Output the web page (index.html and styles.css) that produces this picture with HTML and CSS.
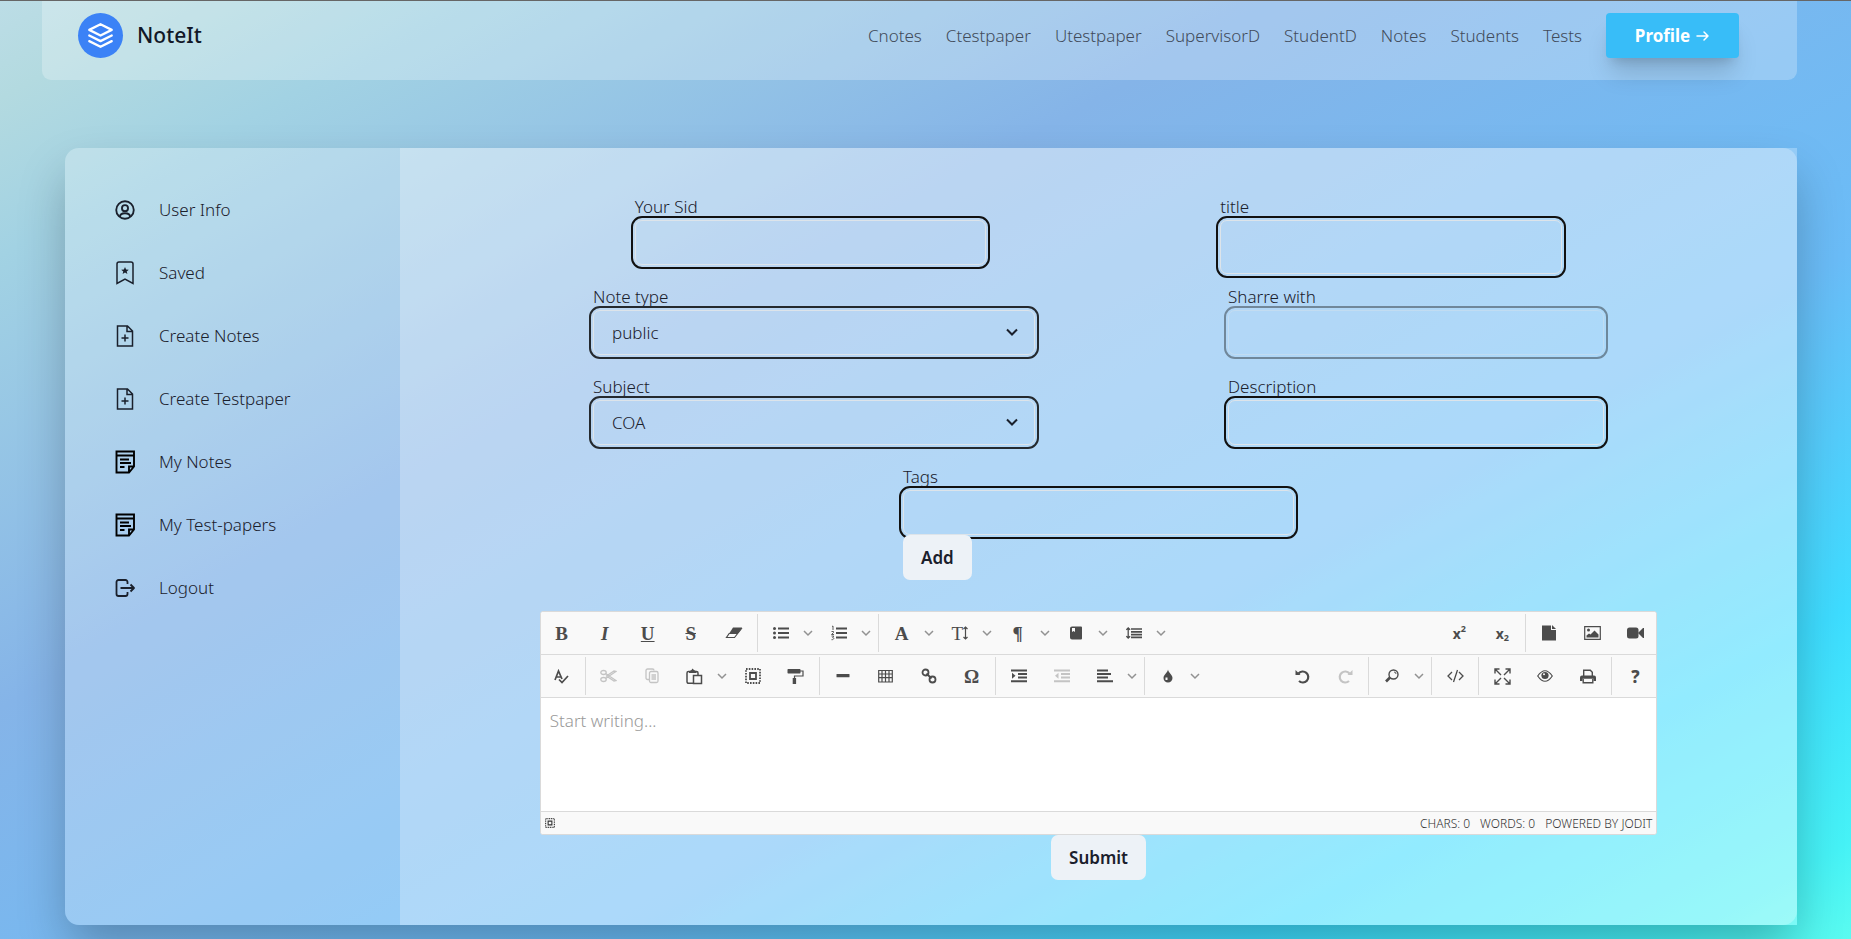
FILE: index.html
```
<!DOCTYPE html>
<html lang="en">
<head>
  <meta charset="UTF-8">
  <meta name="viewport" content="width=device-width, initial-scale=1.0">
  <title>NoteIt</title>
  <link rel="stylesheet" href="styles.css">
</head>
<body>

  <!-- shared icons -->
  <svg class="sprite" aria-hidden="true">
    <symbol id="chev" viewBox="0 0 10 10"><path d="M1 3l4 4 4-4" fill="none" stroke="#929292" stroke-width="1.500"/></symbol>
    <symbol id="file-plus" viewBox="0 0 24 24"><path d="M4.500 2h10l5 5v15h-15zM14 2v5.500h5.500M12 10.500v7M8.500 14h7" fill="none" stroke="currentColor" stroke-width="1.500"/></symbol>
    <symbol id="note" viewBox="0 0 24 24"><path d="M3.500 1.500h17.500v15l-5 6H3.500zM3.500 5.500H21M7 9.500h9M7 13h11M7 17h4.500M21 16.500h-5V22" fill="none" stroke="#000" stroke-width="1.900"/></symbol>
    <symbol id="select-all" viewBox="0 0 16 16"><path d="M1 1h14v14H1z" fill="none" stroke="currentColor" stroke-width="1.800" stroke-dasharray="1.600 1.200"/><path d="M5 5h6v6H5z" fill="none" stroke="currentColor" stroke-width="1.800"/></symbol>
  </svg>

  <header class="navbar">
    <a href="#" class="brand">
      <span class="brand-logo">
        <svg width="27" height="27" viewBox="0 0 24 24" fill="none" stroke="#fff" stroke-width="2" stroke-linecap="round" stroke-linejoin="round"><path d="M12 2L2 7l10 5 10-5-10-5zM2 17l10 5 10-5M2 12l10 5 10-5"/></svg>
      </span>
      <span>NoteIt</span>
    </a>
    <nav class="nav-links">
      <a href="#">Cnotes</a>
      <a href="#">Ctestpaper</a>
      <a href="#">Utestpaper</a>
      <a href="#">SupervisorD</a>
      <a href="#">StudentD</a>
      <a href="#">Notes</a>
      <a href="#">Students</a>
      <a href="#">Tests</a>
      <button type="button" class="profile-btn">Profile
        <svg width="14" height="14" viewBox="0 0 14 14" fill="none" stroke="#fff" stroke-width="1.500" stroke-linecap="round" stroke-linejoin="round"><path d="M1 7h11M8 3l4 4-4 4"/></svg>
      </button>
    </nav>
  </header>

  <main class="panel">
    <aside class="sidebar">
      <a href="#">
        <svg width="24" height="24" viewBox="0 0 26 26" fill="none" stroke="currentColor" stroke-width="2"><circle cx="13" cy="13" r="9.500"/><circle cx="13" cy="11" r="3.300"/><path d="M7.500 20.500c0-3 2-4 5.500-4s5.500 1 5.500 4"/></svg>
        User Info
      </a>
      <a href="#">
        <svg width="24" height="24" viewBox="0 0 24 24" fill="none" stroke="currentColor" stroke-width="1.500"><path d="M4 22.500V3a2 2 0 0 1 2-2h12a2 2 0 0 1 2 2v19.500l-8-4.500z"/><path d="M12 6l1.100 2.500 2.700.200-2.100 1.700.7 2.600-2.400-1.400L9.600 13l.7-2.600-2.100-1.700 2.700-.2z" fill="currentColor" stroke="none"/></svg>
        Saved
      </a>
      <a href="#"><svg width="24" height="24"><use href="#file-plus"/></svg>Create Notes</a>
      <a href="#"><svg width="24" height="24"><use href="#file-plus"/></svg>Create Testpaper</a>
      <a href="#"><svg width="24" height="24"><use href="#note"/></svg>My Notes</a>
      <a href="#"><svg width="24" height="24"><use href="#note"/></svg>My Test-papers</a>
      <a href="#">
        <svg width="24" height="24" viewBox="0 0 24 24" fill="none" stroke="currentColor" stroke-width="1.800" stroke-linejoin="round"><path d="M14.500 8V6a2 2 0 0 0-2-2H5.500a2 2 0 0 0-2 2v12a2 2 0 0 0 2 2h7a2 2 0 0 0 2-2v-2M7.500 12h13.500M17.500 8.500L21 12l-3.500 3.500"/></svg>
        Logout
      </a>
    </aside>

    <form class="note-form">
      <div class="form-row">
        <div class="field w-sm">
          <label for="sid">Your Sid</label>
          <input type="text" id="sid">
        </div>
        <div class="field w-xs">
          <label for="title">title</label>
          <input type="text" id="title" class="tall">
        </div>
      </div>

      <div class="form-row">
        <div class="field w-lg">
          <label for="type">Note type</label>
          <div class="select-wrap">
            <select id="type"><option>public</option><option>private</option></select>
            <svg width="12" height="12" viewBox="0 0 12 12"><path d="M1 3.500l5 5 5-5" fill="none" stroke="#1a202c" stroke-width="2"/></svg>
          </div>
        </div>
        <div class="field w-md">
          <label for="share">Sharre with</label>
          <input type="text" id="share" disabled>
        </div>
      </div>

      <div class="form-row">
        <div class="field w-lg">
          <label for="subject">Subject</label>
          <div class="select-wrap">
            <select id="subject"><option>COA</option></select>
            <svg width="12" height="12" viewBox="0 0 12 12"><path d="M1 3.500l5 5 5-5" fill="none" stroke="#1a202c" stroke-width="2"/></svg>
          </div>
        </div>
        <div class="field w-md">
          <label for="desc">Description</label>
          <input type="text" id="desc">
        </div>
      </div>

      <div class="form-row">
        <div class="tags w-tags">
          <label for="tags">Tags</label>
          <input type="text" id="tags">
          <button type="button" class="btn">Add</button>
        </div>
      </div>

      <div class="editor">
        <div class="toolbar">
          <div class="group">
            <button type="button" class="serif"><b>B</b></button>
            <button type="button" class="serif"><b><i>I</i></b></button>
            <button type="button" class="serif"><b><u>U</u></b></button>
            <button type="button" class="serif strike"><b>S</b></button>
            <button type="button" aria-label="Clear"><svg width="18" height="14" viewBox="0 0 18 14"><path d="M8 1.500h9L13.500 7h-9z" fill="currentColor"/><path d="M4.500 7L1.500 11.500h8L17 2M13 7.500H4.500" fill="none" stroke="currentColor" stroke-width="1.200"/></svg></button>
          </div>
          <div class="group">
            <button type="button" class="drop" aria-label="Bullet list"><svg width="16" height="16" viewBox="0 0 16 16"><path d="M5 3.500h11M5 8h11M5 12.500h11" stroke="currentColor" stroke-width="2"/><circle cx="1.500" cy="3.500" r="1.500"/><circle cx="1.500" cy="8" r="1.500"/><circle cx="1.500" cy="12.500" r="1.500"/></svg><svg class="chev"><use href="#chev"/></svg></button>
            <button type="button" class="drop" aria-label="Numbered list"><svg width="16" height="16" viewBox="0 0 16 16"><path d="M5 3.500h11M5 8h11M5 12.500h11" stroke="currentColor" stroke-width="2"/><path d="M1 1.500l1-.5v4M.5 6.500h2v1l-2 2h2.500M.5 11h2.200l-1 1.700c2 0 1 2.300-1.200 2" fill="none" stroke="currentColor" stroke-width=".9"/></svg><svg class="chev"><use href="#chev"/></svg></button>
          </div>
          <div class="group">
            <button type="button" class="drop serif"><span><b>A</b></span><svg class="chev"><use href="#chev"/></svg></button>
            <button type="button" class="drop serif"><span>T<svg width="5" height="14" viewBox="0 0 5 14"><path d="M2.500 1v12M.5 3l2-2 2 2M.5 11l2 2 2-2" fill="none" stroke="currentColor" stroke-width="1.200"/></svg></span><svg class="chev"><use href="#chev"/></svg></button>
            <button type="button" class="drop serif"><span><b>¶</b></span><svg class="chev"><use href="#chev"/></svg></button>
            <button type="button" class="drop" aria-label="Class"><svg width="12" height="14" viewBox="0 0 12 14"><path d="M2 .5h9a1 1 0 0 1 1 1v11a1 1 0 0 1-1 1H2a2 2 0 0 1-2-2v-9a2 2 0 0 1 2-2z"/><path d="M2 2h3v4L3.500 5 2 6z" fill="#f9f9f9"/></svg><svg class="chev"><use href="#chev"/></svg></button>
            <button type="button" class="drop" aria-label="Line height"><svg width="16" height="14" viewBox="0 0 16 14"><path d="M5 3h11M5 5.800h11M5 8.600h11M5 11.400h11" stroke="currentColor" stroke-width="1.700"/><path d="M2.200 2v10M.3 3.800L2.200 2l1.900 1.800M.3 10.200L2.200 12l1.900-1.800" fill="none" stroke="currentColor" stroke-width="1.300"/></svg><svg class="chev"><use href="#chev"/></svg></button>
          </div>
          <div class="spacer"></div>
          <div class="group">
            <button type="button" class="script">x<sup>2</sup></button>
            <button type="button" class="script">x<sub>2</sub></button>
          </div>
          <div class="group">
            <button type="button" aria-label="File"><svg width="14" height="16" viewBox="0 0 14 16"><path d="M0 .5h9v4.500h5v10.500H0z"/><path d="M10 0l4 4h-4z"/></svg></button>
            <button type="button" aria-label="Image"><svg width="17" height="14" viewBox="0 0 17 14"><path d="M.7.7h15.600v12.600H.7z" fill="none" stroke="currentColor" stroke-width="1.200"/><circle cx="4.500" cy="4" r="1.500"/><path d="M2.500 11.500V9.500L5 7.500l1.500 1 4-4 4 4v3z"/></svg></button>
            <button type="button" aria-label="Video"><svg width="17" height="12" viewBox="0 0 17 12"><rect y=".5" width="11.500" height="11" rx="2.500"/><path d="M11 6l5-5h1v10h-1z"/></svg></button>
          </div>
        </div>

        <div class="toolbar">
          <div class="group">
            <button type="button" aria-label="Spellcheck"><svg width="15" height="15" viewBox="0 0 15 15"><path d="M1 11L4.500 2 8 10M2 8h5M5 10.500l3 3L14 7" fill="none" stroke="currentColor" stroke-width="1.700"/></svg></button>
          </div>
          <div class="group">
            <button type="button" disabled aria-label="Cut"><svg width="17" height="14" viewBox="0 0 17 14" fill="none" stroke="currentColor" stroke-width="1.300"><ellipse cx="3.500" cy="3.500" rx="2.700" ry="2"/><ellipse cx="3.500" cy="10.500" rx="2.700" ry="2"/><path d="M5.500 4.500L16 11.500l-2 .5-8-5.200M5.500 9.500L16 2.500 14 2 6 7.200"/></svg></button>
            <button type="button" disabled aria-label="Copy"><svg width="14" height="16" viewBox="0 0 14 16" fill="none" stroke="currentColor" stroke-width="1.300"><path d="M4 11.500H2.500A1.500 1.500 0 0 1 1 10V2.500A1.500 1.500 0 0 1 2.500 1h5A1.500 1.500 0 0 1 9 2.500"/><rect x="4.500" y="3.500" width="8.500" height="11" rx="1.500"/><path d="M6.500 7h4.500M6.500 9h4.500M6.500 11h4.500"/></svg></button>
            <button type="button" class="drop" aria-label="Paste"><svg width="17" height="17" viewBox="0 0 17 17"><path d="M7 15.300H2.500a1.500 1.500 0 0 1-1.500-1.500V5a1.500 1.500 0 0 1 1.500-1.500h8A1.500 1.500 0 0 1 12 5v2M7.500 7.500h8v8h-8z" fill="none" stroke="currentColor" stroke-width="1.500"/><path d="M3 5V3.500L5.500 2 6.500.5 8 2l2.500 1.500V5z"/></svg><svg class="chev"><use href="#chev"/></svg></button>
            <button type="button" aria-label="Select all"><svg width="16" height="16"><use href="#select-all"/></svg></button>
            <button type="button" aria-label="Copy format"><svg width="17" height="16" viewBox="0 0 17 16"><rect x=".5" y="1" width="13" height="4.500" rx=".7"/><path d="M13 3h3v5H7.500v3" fill="none" stroke="currentColor" stroke-width="1.200"/><path d="M5.700 10h3.400v6H5.700z"/></svg></button>
          </div>
          <div class="group">
            <button type="button" aria-label="Line"><svg width="14" height="14" viewBox="0 0 14 14"><rect x=".5" y="5" width="13" height="3.300" rx=".6"/></svg></button>
            <button type="button" aria-label="Table"><svg width="15" height="14" viewBox="0 0 15 14"><path d="M.7 1.500h13.600v11.500H.7zM.7 5h13.600M.7 8.700h13.600M4 1v12M7.500 1v12M11 1v12" fill="none" stroke="currentColor" stroke-width="1.200"/></svg></button>
            <button type="button" aria-label="Link"><svg width="16" height="16" viewBox="0 0 16 16" fill="none" stroke="currentColor" stroke-width="1.800"><circle cx="4.500" cy="4.500" r="3"/><circle cx="11.500" cy="11.500" r="3"/><path d="M5.500 5.500l5 5"/></svg></button>
            <button type="button" class="serif"><b>Ω</b></button>
          </div>
          <div class="group">
            <button type="button" aria-label="Indent"><svg width="16" height="14" viewBox="0 0 16 14"><path d="M0 1.500h16M7 5h9M7 8.500h9M0 12.300h16" stroke="currentColor" stroke-width="1.900"/><path d="M1 3.800l3.500 3-3.500 3z"/></svg></button>
            <button type="button" disabled aria-label="Outdent"><svg width="16" height="14" viewBox="0 0 16 14"><path d="M0 1.500h16M7 5h9M7 8.500h9M0 12.300h16" stroke="currentColor" stroke-width="1.900"/><path d="M4.500 3.800L1 6.800l3.500 3z"/></svg></button>
            <button type="button" class="drop" aria-label="Align"><svg width="16" height="14" viewBox="0 0 16 14"><path d="M0 1.500h11M0 5h14M0 8.500h11M0 12.300h16" stroke="currentColor" stroke-width="1.900"/></svg><svg class="chev"><use href="#chev"/></svg></button>
          </div>
          <div class="group">
            <button type="button" class="drop" aria-label="Color"><svg width="10" height="14" viewBox="0 0 10 14"><path d="M5 .5C5.500 4 9.500 5.500 9.500 9a4.500 4.500 0 0 1-9 0C.5 5.500 4.500 4 5 .5z"/><path d="M2.500 8.500h2v2.500h-2z" fill="#f9f9f9"/></svg><svg class="chev"><use href="#chev"/></svg></button>
          </div>
          <div class="spacer"></div>
          <div class="group">
            <button type="button" aria-label="Undo"><svg width="15" height="15" viewBox="0 0 15 15"><path d="M3.500 4.500A5.500 5.500 0 1 1 4 12" fill="none" stroke="currentColor" stroke-width="2.200"/><path d="M.5 1l5 5h-5z"/></svg></button>
            <button type="button" disabled aria-label="Redo"><svg width="15" height="15" viewBox="0 0 15 15"><path d="M11.500 4.500A5.500 5.500 0 1 0 11 12" fill="none" stroke="currentColor" stroke-width="2.200"/><path d="M14.500 1l-5 5h5z"/></svg></button>
          </div>
          <div class="group">
            <button type="button" class="drop" aria-label="Search"><svg width="14" height="14" viewBox="0 0 14 14"><circle cx="8.500" cy="5.500" r="4.500" fill="none" stroke="currentColor" stroke-width="1.400"/><path d="M5 8.500L1 12.500" stroke="currentColor" stroke-width="2.600"/><path d="M9 3q2 0 2 2" fill="none" stroke="currentColor" stroke-width=".9"/></svg><svg class="chev"><use href="#chev"/></svg></button>
          </div>
          <div class="group">
            <button type="button" aria-label="Source"><svg width="17" height="14" viewBox="0 0 17 14"><path d="M5 3L1 7l4 4M12 3l4 4-4 4M10.500 1l-4 12" fill="none" stroke="currentColor" stroke-width="1.300"/></svg></button>
          </div>
          <div class="group">
            <button type="button" aria-label="Fullscreen"><svg width="17" height="17" viewBox="0 0 17 17"><path d="M1.500 1.500l5.500 5.500M15.500 1.500L10 7M1.500 15.500L7 10M15.500 15.500L10 10M1 5.500V1h4.500M11.500 1H16v4.500M1 11.500V16h4.500M11.500 16H16v-4.500" fill="none" stroke="currentColor" stroke-width="1.400"/></svg></button>
            <button type="button" aria-label="Preview"><svg width="16" height="12" viewBox="0 0 16 12"><path d="M.7 6Q8-4.500 15.300 6 8 16.500.7 6z" fill="none" stroke="currentColor" stroke-width="1.200"/><circle cx="8" cy="5.500" r="3.600"/><circle cx="7" cy="4.300" r="1" fill="#f9f9f9"/></svg></button>
            <button type="button" aria-label="Print"><svg width="16" height="15" viewBox="0 0 16 15"><path d="M3.700 7V1.200h6.600l2 2V7M3.200 10v3.700h9.600V10" fill="none" stroke="currentColor" stroke-width="1.400"/><path d="M2 6.500h12a2 2 0 0 1 2 2V12h-2.500V9.800h-11V12H0V8.500a2 2 0 0 1 2-2z"/></svg></button>
          </div>
          <div class="group">
            <button type="button" class="help">?</button>
          </div>
        </div>

        <textarea aria-label="Note" placeholder="Start writing..."></textarea>

        <div class="status">
          <svg width="10" height="10"><use href="#select-all"/></svg>
          <div class="spacer"></div>
          <span>CHARS: 0</span>
          <span>WORDS: 0</span>
          <a href="#">POWERED BY JODIT</a>
        </div>
      </div>

      <button type="submit" class="btn">Submit</button>
    </form>
  </main>

</body>
</html>
```

FILE: styles.css
```
* {
  box-sizing: border-box;
}

body {
  margin: 0;
  min-height: 100vh;
  border-top: 1px solid #666;
  font-family: "Noto Sans", "Open Sans", sans-serif;
  font-size: 17px;
  font-weight: 300;
  line-height: 27px;
  color: #1a202c;
  background: linear-gradient(151deg, #bcdde6 0%, #b3dae0 5%, #a2d2e3 13%, #85b4e8 36%, #6abcf7 65%, #3edcff 83%, #46f2f6 95%, #5afbf0 100%) no-repeat;
}

a {
  color: inherit;
  text-decoration: none;
}

button,
input,
select,
textarea {
  font: inherit;
  color: inherit;
}

button {
  border: none;
  padding: 0;
  cursor: pointer;
}

.sprite {
  position: absolute;
  width: 0;
  height: 0;
}

/* top bar */
.navbar {
  display: flex;
  justify-content: space-between;
  align-items: center;
  margin: 0 54px 68px 42px;
  padding: 12px 58px 22px 36px;
  background: rgba(255, 255, 255, 0.25);
  border-radius: 0 0 9px 9px;
}

.brand {
  display: flex;
  align-items: center;
  gap: 14px;
  font-size: 21px;
  font-weight: 500;
  color: #111827;
}

.brand-logo {
  display: flex;
  align-items: center;
  justify-content: center;
  width: 45px;
  height: 45px;
  border-radius: 50%;
  background: #3b82f6;
}

.nav-links {
  display: flex;
  align-items: center;
  gap: 24px;
  color: #414b5a;
}

.profile-btn {
  display: flex;
  align-items: center;
  justify-content: center;
  gap: 6px;
  width: 133px;
  height: 45px;
  border-radius: 4px;
  background: #38bdf8;
  color: #fff;
  font-weight: 700;
  box-shadow: 0 20px 25px -5px rgba(0, 0, 0, 0.15), 0 8px 10px -6px rgba(0, 0, 0, 0.15);
}

/* main panel */
.panel {
  display: flex;
  margin: 0 54px 12px 65px;
  background: rgba(255, 255, 255, 0.25);
  border-radius: 14px 0 0 14px;
  box-shadow: 0 25px 50px -4px rgba(0, 0, 0, 0.27);
}

.sidebar {
  flex: 0 0 335px;
  display: flex;
  flex-direction: column;
  gap: 36px;
  padding: 48px;
}

.sidebar a {
  display: flex;
  align-items: center;
  gap: 22px;
}

.note-form {
  flex: 1;
  display: flex;
  flex-direction: column;
  align-items: center;
  padding: 45px 0;
  background: rgba(255, 255, 255, 0.25);
  border-radius: 0 14px 14px 0;
}

.form-row {
  display: flex;
  justify-content: space-evenly;
  width: 100%;
}

.field {
  min-height: 90px;
}

.w-xs { width: 342px; }
.w-sm { width: 351px; }
.w-md { width: 376px; }
.w-lg { width: 442px; }
.w-tags { width: 391px; }

label {
  display: block;
}

.note-form input,
.note-form select {
  display: block;
  width: 100%;
  height: 45px;
  padding: 0 18px;
  border: 1px solid #dde4ea;
  border-radius: 7px;
  background: transparent;
  outline: 2px solid #111;
  outline-offset: 2px;
}

.note-form select {
  appearance: none;
  outline-color: #24292e;
}

.note-form input.tall {
  height: 54px;
}

.note-form input:disabled {
  opacity: 0.4;
}

.select-wrap {
  position: relative;
}

.select-wrap svg {
  position: absolute;
  right: 17px;
  top: 16px;
}

.btn {
  position: relative;
  height: 45px;
  padding: 0 18px;
  border-radius: 7px;
  background: #edf2f7;
  font-weight: 600;
}

/* editor */
.editor {
  width: 80%;
  margin-top: 31px;
  background: #fff;
  border: 1px solid #dadada;
  border-radius: 3px;
  overflow: hidden;
}

.toolbar {
  display: flex;
  height: 43px;
  padding: 2px 0;
  background: #f9f9f9;
  border-bottom: 1px solid #dadada;
  color: #4c4c4c;
}

.group {
  display: flex;
  gap: 1px;
  padding: 0 2px;
}

.group:first-child {
  padding-left: 0;
}

.group:last-child {
  padding-right: 0;
}

.group + .group {
  border-left: 1px solid #dadada;
}

.group button {
  display: flex;
  align-items: center;
  justify-content: center;
  width: 42px;
  background: none;
  fill: currentColor;
}

.group button:disabled {
  opacity: 0.3;
}

.group .drop {
  display: grid;
  grid-template-columns: 42px 12px;
  justify-items: center;
  justify-content: start;
  width: 57px;
}

.group .drop:last-child {
  width: 58px;
}

.chev {
  width: 10px;
  height: 10px;
}

.serif {
  font-family: "Liberation Serif", serif;
  font-size: 19px;
  font-weight: 400;
}

.strike {
  text-decoration: line-through;
}

.script {
  font-size: 14px;
  font-weight: 700;
}

.script sup,
.script sub {
  font-size: 9px;
  line-height: 9px;
}

.script sup {
  align-self: flex-start;
  padding-top: 10px;
}

.script sub {
  align-self: flex-end;
  padding-bottom: 10px;
}

.help {
  font-weight: 800;
}

.spacer {
  flex: 1;
}

textarea {
  display: block;
  width: 100%;
  height: 113px;
  padding: 9px;
  border: none;
  resize: none;
  background: #fff;
}

textarea::placeholder {
  color: #999;
}

.status {
  display: flex;
  align-items: center;
  gap: 10px;
  height: 23px;
  padding: 0 4px;
  background: #f9f9f9;
  border-top: 1px solid #dadada;
  font-size: 12px;
  color: #333;
}
```
